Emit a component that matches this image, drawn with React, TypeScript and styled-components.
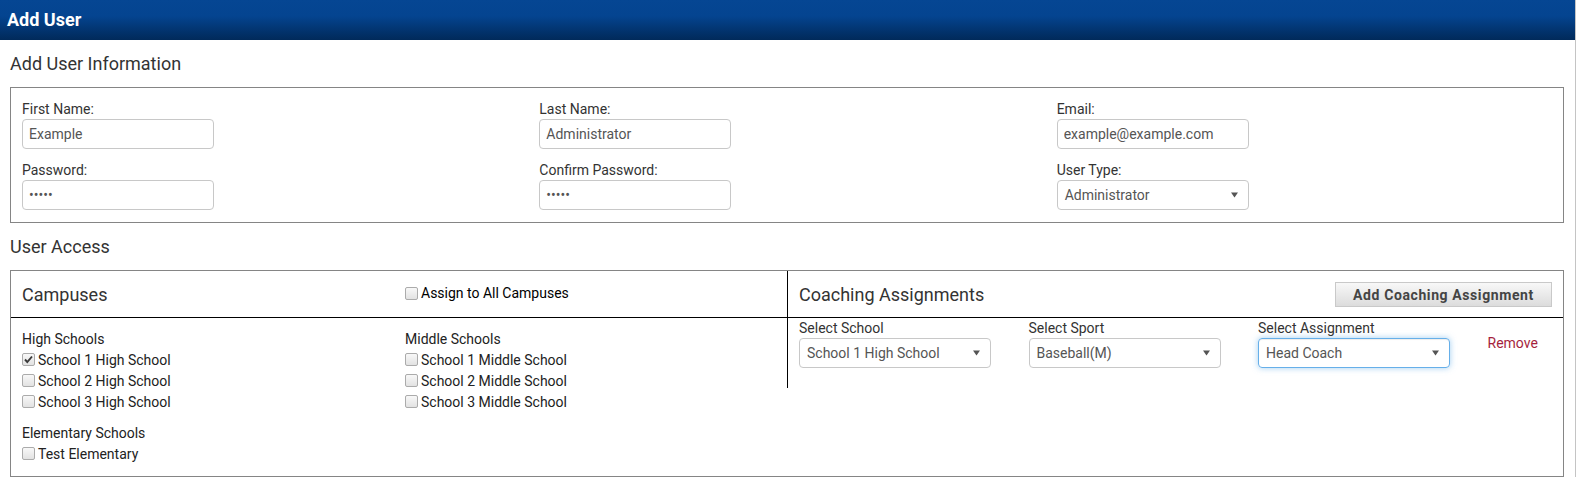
import React from 'react';
import styled, { createGlobalStyle } from 'styled-components';

const highSchools = [
  { name: 'School 1 High School', checked: true },
  { name: 'School 2 High School', checked: false },
  { name: 'School 3 High School', checked: false },
];

const middleSchools = [
  { name: 'School 1 Middle School', checked: false },
  { name: 'School 2 Middle School', checked: false },
  { name: 'School 3 Middle School', checked: false },
];

const elementarySchools = [{ name: 'Test Elementary', checked: false }];

const Caret = () => (
  <svg width="7" height="6" viewBox="0 0 7 6">
    <path d="M0 0.5 H7 L3.5 5.5 Z" fill="#555" />
  </svg>
);

const Check = ({ checked }: { checked?: boolean }) => (
  <CheckBox>
    {checked && (
      <svg width="11" height="11" viewBox="0 0 11 11">
        <path d="M2 5.5 L4.3 8 L9 2.5" fill="none" stroke="#3a3a3a" strokeWidth="1.9" />
      </svg>
    )}
  </CheckBox>
);

const FakeSelect = ({ value, focused }: { value: string; focused?: boolean }) => (
  <SelectBox $focused={focused}>
    <span>{value}</span>
    <Caret />
  </SelectBox>
);

const SchoolGroup = ({ title, schools }: { title: string; schools: { name: string; checked: boolean }[] }) => (
  <Group>
    <GroupTitle>{title}</GroupTitle>
    {schools.map((s) => (
      <CheckRow key={s.name}>
        <Check checked={s.checked} />
        {s.name}
      </CheckRow>
    ))}
  </Group>
);

export default function App() {
  return (
    <>
      <GlobalStyle />
      <Page>
        <TitleBar>Add User</TitleBar>
        <Content>
          <SectionHeading>Add User Information</SectionHeading>
          <InfoBox>
            <FieldColumn>
              <Field>
                <Label>First Name:</Label>
                <TextInput defaultValue="Example" readOnly />
              </Field>
              <Field>
                <Label>Password:</Label>
                <TextInput type="password" defaultValue="admin" readOnly />
              </Field>
            </FieldColumn>
            <FieldColumn>
              <Field>
                <Label>Last Name:</Label>
                <TextInput defaultValue="Administrator" readOnly />
              </Field>
              <Field>
                <Label>Confirm Password:</Label>
                <TextInput type="password" defaultValue="admin" readOnly />
              </Field>
            </FieldColumn>
            <FieldColumn>
              <Field>
                <Label>Email:</Label>
                <TextInput defaultValue="example@example.com" readOnly />
              </Field>
              <Field>
                <Label>User Type:</Label>
                <FakeSelect value="Administrator" />
              </Field>
            </FieldColumn>
          </InfoBox>

          <SectionHeading>User Access</SectionHeading>
          <AccessBox>
            <CampusPanel>
              <CampusHeader>
                <PanelTitle>Campuses</PanelTitle>
                <AssignAll>
                  <Check />
                  Assign to All Campuses
                </AssignAll>
              </CampusHeader>
              <CampusBody>
                <div>
                  <SchoolGroup title="High Schools" schools={highSchools} />
                  <SchoolGroup title="Elementary Schools" schools={elementarySchools} />
                </div>
                <div>
                  <SchoolGroup title="Middle Schools" schools={middleSchools} />
                </div>
              </CampusBody>
            </CampusPanel>
            <CoachingPanel>
              <CoachingHeader>
                <PanelTitle>Coaching Assignments</PanelTitle>
                <GrayButton>Add Coaching Assignment</GrayButton>
              </CoachingHeader>
              <CoachingBody>
                <div>
                  <Label>Select School</Label>
                  <FakeSelect value="School 1 High School" />
                </div>
                <div>
                  <Label>Select Sport</Label>
                  <FakeSelect value="Baseball(M)" />
                </div>
                <div>
                  <Label>Select Assignment</Label>
                  <FakeSelect value="Head Coach" focused />
                </div>
                <RemoveLink href="#">Remove</RemoveLink>
              </CoachingBody>
            </CoachingPanel>
          </AccessBox>
        </Content>
      </Page>
    </>
  );
}

const GlobalStyle = createGlobalStyle`
  * { box-sizing: border-box; }
  body {
    margin: 0;
    background: #fff;
    color: #333;
    font-family: Roboto, "Liberation Sans", Arial, sans-serif;
  }
`;

const Page = styled.div`
  min-height: 100vh;
  border-right: 1px solid #c4c4c4;
`;

const TitleBar = styled.header`
  height: 40px;
  padding-left: 7px;
  line-height: 40px;
  font-size: 18px;
  font-weight: 700;
  color: #fff;
  background: linear-gradient(180deg, #054693 0%, #044490 40%, #02326b 80%, #012a5a 100%);
`;

const Content = styled.main`
  padding: 0 11px 0 10px;
`;

const SectionHeading = styled.h2`
  margin: 14px 0 13px;
  font-size: 18px;
  font-weight: 400;
  line-height: 20px;
  color: #333;
`;

const InfoBox = styled.div`
  display: grid;
  grid-template-columns: repeat(3, 1fr);
  padding: 12px 0;
  border: 1px solid #858585;
`;

const FieldColumn = styled.div`
  display: flex;
  flex-direction: column;
  padding-left: 11px;
`;

const Field = styled.div`
  & + & {
    margin-top: 12px;
  }
`;

const Label = styled.label`
  display: block;
  font-size: 14px;
  line-height: 19px;
  color: #333;
`;

const TextInput = styled.input`
  display: block;
  width: 192px;
  height: 30px;
  padding: 0 6px;
  border: 1px solid #c8c8c8;
  border-radius: 4px;
  font-family: inherit;
  font-size: 14px;
  color: #555;
  outline: none;
`;

const SelectBox = styled.div<{ $focused?: boolean }>`
  display: flex;
  align-items: center;
  justify-content: space-between;
  width: 192px;
  height: 30px;
  padding: 0 10px 0 7px;
  border: 1px solid ${(p) => (p.$focused ? '#66afe9' : '#c8c8c8')};
  border-radius: 4px;
  font-size: 14px;
  color: #555;
  box-shadow: ${(p) =>
    p.$focused ? 'inset 0 1px 1px rgba(0,0,0,.075), 0 0 6px rgba(102,175,233,.6)' : 'none'};
`;

const AccessBox = styled.div`
  display: flex;
  align-items: flex-start;
  border: 1px solid #858585;
`;

const CampusPanel = styled.section`
  flex: none;
  width: 776px;
`;

const PanelHeader = styled.div`
  height: 47px;
  border-bottom: 1px solid #000;
`;

const CampusHeader = styled(PanelHeader)`
  display: grid;
  grid-template-columns: 383px 1fr;
  align-items: center;
  padding-left: 11px;
`;

const PanelTitle = styled.h3`
  margin: 0;
  font-size: 18px;
  font-weight: 400;
  color: #333;
`;

const AssignAll = styled.label`
  display: flex;
  align-items: center;
  gap: 3px;
  font-size: 14px;
  font-weight: 400;
  color: #000;
  margin-top: -2px;
`;

const CampusBody = styled.div`
  display: grid;
  grid-template-columns: 383px 1fr;
  padding: 11px 11px 12px;
`;

const Group = styled.div`
  & + & {
    margin-top: 11px;
  }
`;

const GroupTitle = styled.div`
  font-size: 14px;
  font-weight: 400;
  line-height: 20px;
  color: #222;
`;

const CheckRow = styled.label`
  display: flex;
  align-items: center;
  gap: 3px;
  height: 21px;
  font-size: 14px;
  color: #222;
`;

const CheckBox = styled.span`
  display: inline-flex;
  align-items: center;
  justify-content: center;
  flex: none;
  width: 13px;
  height: 13px;
  border: 1px solid #ababab;
  border-radius: 2px;
  background: linear-gradient(#f8f8f8, #e2e2e2);
`;

const CoachingPanel = styled.section`
  flex: 1;
  border-left: 1px solid #000;
`;

const CoachingHeader = styled(PanelHeader)`
  display: flex;
  align-items: center;
  justify-content: space-between;
  padding: 0 11px;
`;

const GrayButton = styled.button`
  height: 25px;
  width: 217px;
  padding: 0;
  border: 1px solid #c9c9c9;
  border-radius: 0;
  background: linear-gradient(#f8f8f8, #dcdcdc);
  font-family: inherit;
  font-size: 14px;
  font-weight: 700;
  letter-spacing: 0.6px;
  color: #444;
  margin-top: 1px;
`;

const CoachingBody = styled.div`
  display: grid;
  grid-template-columns: repeat(3, 229.5px) auto;
  padding: 1px 0 20px 11px;
`;

const RemoveLink = styled.a`
  margin-top: 15px;
  font-size: 14px;
  line-height: 19px;
  color: #a51f3d;
  text-decoration: none;
`;
